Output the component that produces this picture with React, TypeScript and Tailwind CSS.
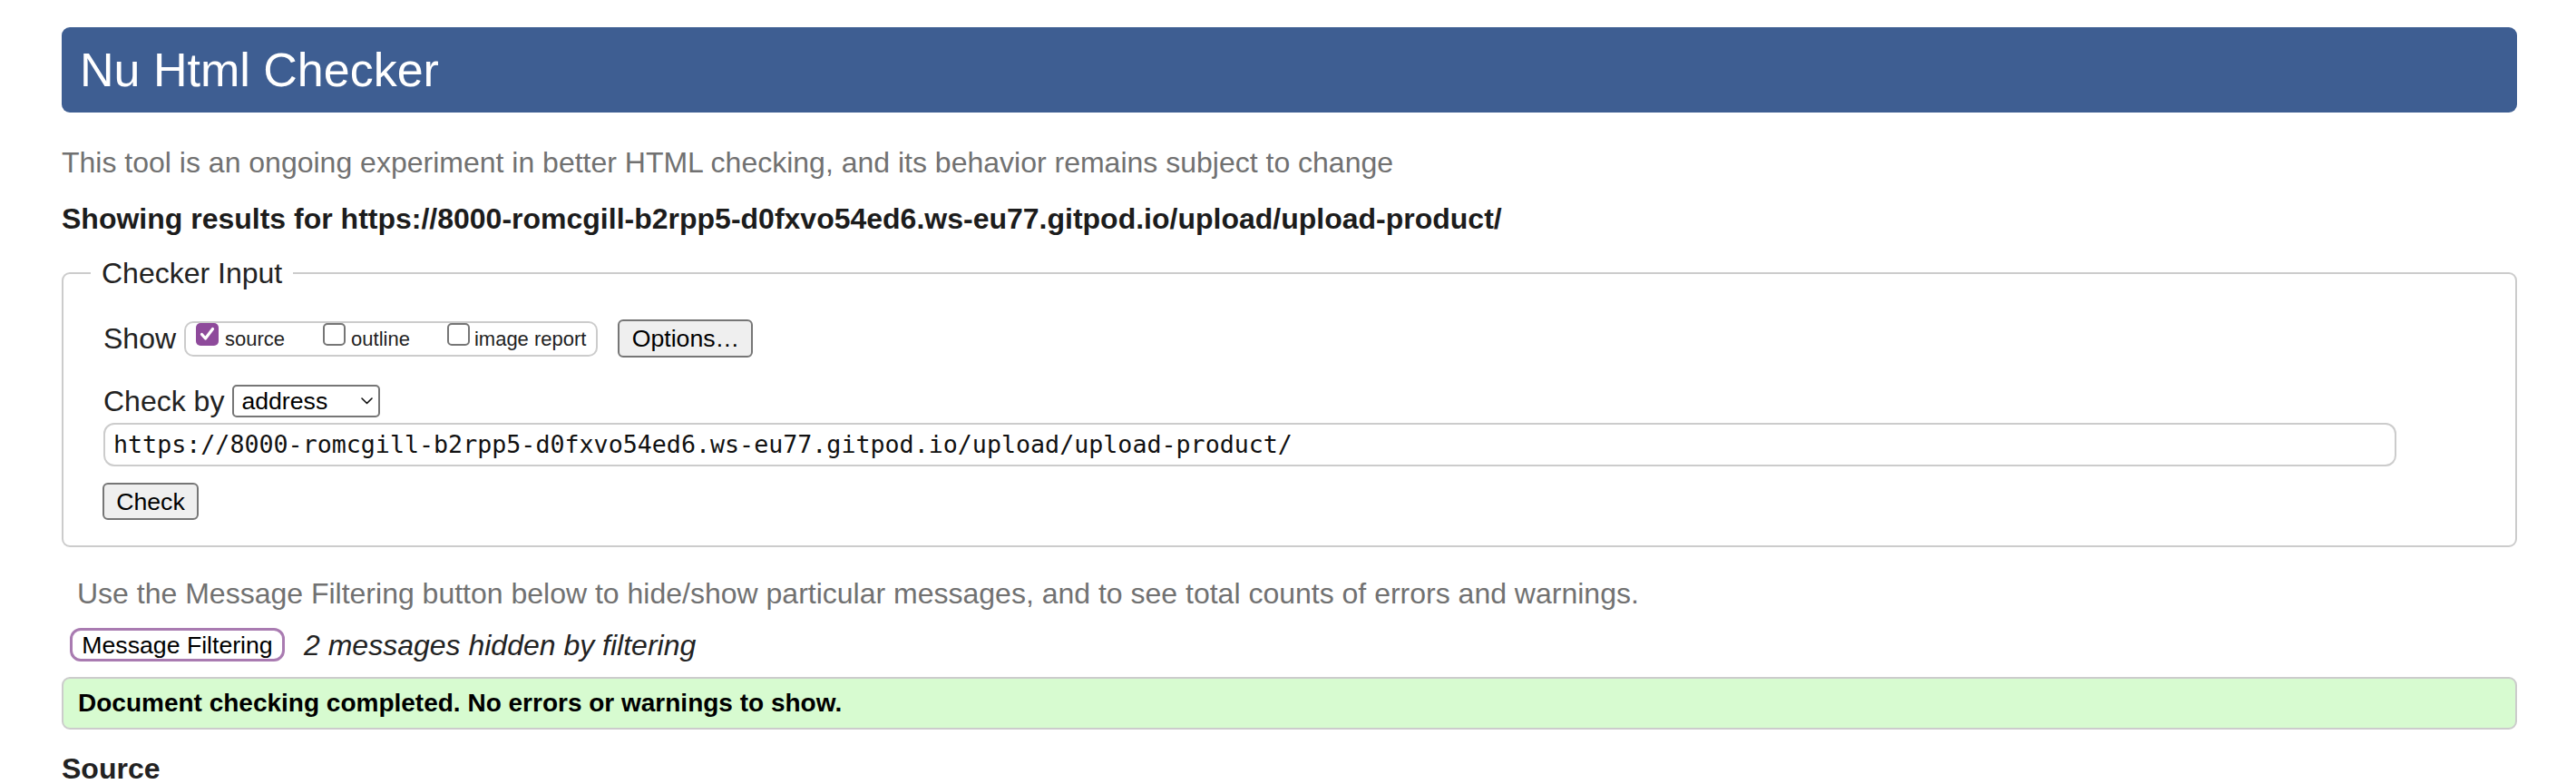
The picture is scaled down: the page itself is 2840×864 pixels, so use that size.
import React from "react";

function CheckedBox() {
  return (
    <span className="mb-[10px] flex h-[25px] w-[25px] shrink-0 items-center justify-center rounded-[5px] bg-[#8e4a9b]">
      <svg width="25" height="25" viewBox="0 0 25 25">
        <path d="M6.5 12.5 L10.5 17 L18.5 6.5" fill="none" stroke="#ffffff" strokeWidth="3.2" strokeLinecap="round" strokeLinejoin="round" />
      </svg>
    </span>
  );
}

function EmptyBox() {
  return <span className="mb-[10px] block h-[25px] w-[25px] shrink-0 rounded-[5px] border-2 border-[#767676] bg-white" />;
}

export default function App() {
  return (
    <div className="min-h-[864px] bg-white pl-[68px] pr-[65px] pt-[30px] font-['Liberation_Sans',Arial,sans-serif] text-[#222222]">
      <header className="flex h-[94px] items-center rounded-[9px] bg-[#3e5e92] pl-[20px]">
        <h1 className="text-[52px] font-normal leading-[52px] text-white">Nu Html Checker</h1>
      </header>

      <p className="mt-[37px] text-[32px] leading-[36px] text-[#717171]">
        This tool is an ongoing experiment in better HTML checking, and its behavior remains subject to change
      </p>

      <p className="mt-[26px] text-[32px] font-bold leading-[36px] text-[#1c1c1c]">
        Showing results for https://8000-romcgill-b2rpp5-d0fxvo54ed6.ws-eu77.gitpod.io/upload/upload-product/
      </p>

      <fieldset className="mt-[24px] min-w-0 rounded-[9px] border-2 border-[#cccccc] pb-[28px] pl-[44px] pr-[47px] pt-[33px]">
        <legend className="ml-[-14px] px-[12px] text-[32px] leading-[36px]">Checker Input</legend>

        <div className="flex h-[42px] items-center">
          <span className="text-[32px] leading-[36px]">Show</span>
          <div className="ml-[9px] flex h-[39px] items-center rounded-[10px] border-2 border-[#cccccc] pl-[11px] pr-[11px]">
            <label className="mr-[42px] flex items-center gap-[7px]">
              <CheckedBox />
              <span className="text-[22px] leading-[25px]">source</span>
            </label>
            <label className="mr-[41px] flex items-center gap-[6px]">
              <EmptyBox />
              <span className="text-[22px] leading-[25px]">outline</span>
            </label>
            <label className="flex items-center gap-[5px]">
              <EmptyBox />
              <span className="text-[22px] leading-[25px]">image report</span>
            </label>
          </div>
          <button className="ml-[22px] flex h-[42px] w-[149px] items-center justify-center rounded-[6px] border-2 border-[#767676] bg-[#efefef] text-[26.67px] leading-[30px] text-black">
            Options…
          </button>
        </div>

        <div className="mt-[30px] flex h-[36px] items-center">
          <span className="text-[32px] leading-[36px]">Check by</span>
          <div className="ml-[9px] flex h-[36px] w-[163px] items-center justify-between rounded-[5px] border-2 border-[#767676] bg-white pl-[8px] pr-[6px]">
            <span className="text-[26.67px] leading-[30px] text-black">address</span>
            <svg width="13" height="8" viewBox="0 0 13 8">
              <path d="M1 1 L6.5 6.5 L12 1" fill="none" stroke="#111111" strokeWidth="1.6" strokeLinecap="round" strokeLinejoin="round" />
            </svg>
          </div>
        </div>

        <div className="mt-[6px] pr-[84px]">
          <div className="flex h-[48px] w-full items-center rounded-[12px] border-2 border-[#cccccc] bg-white pl-[9px] font-['DejaVu_Sans_Mono',monospace] text-[26.67px] leading-[30px] text-[#111111]">
            https://8000-romcgill-b2rpp5-d0fxvo54ed6.ws-eu77.gitpod.io/upload/upload-product/
          </div>
        </div>

        <button className="mt-[18px] ml-[-1px] flex h-[41px] w-[106px] items-center justify-center rounded-[6px] border-2 border-[#767676] bg-[#efefef] text-[26.67px] leading-[30px] text-black">
          Check
        </button>
      </fieldset>

      <p className="mt-[33px] pl-[17px] text-[32px] leading-[36px] text-[#717171]">
        Use the Message Filtering button below to hide/show particular messages, and to see total counts of errors and warnings.
      </p>

      <div className="mt-[20px] flex h-[37px] items-center pl-[9px]">
        <button className="flex h-[37px] w-[237px] items-center justify-center rounded-[12px] border-[3px] border-[#a97bb1] bg-white text-[26.67px] leading-[30px] text-black">
          Message Filtering
        </button>
        <span className="ml-[21px] text-[32px] italic leading-[36px] text-[#222222]">2 messages hidden by filtering</span>
      </div>

      <div className="mt-[17px] flex h-[58px] items-center rounded-[9px] border-2 border-[#cccccc] bg-[#d7fbd0] pl-[16px]">
        <span className="text-[28px] font-bold leading-[32px] text-black">
          Document checking completed. No errors or warnings to show.
        </span>
      </div>

      <h2 className="mt-[25px] text-[32px] font-bold leading-[36px] text-[#222222]">Source</h2>
    </div>
  );
}
